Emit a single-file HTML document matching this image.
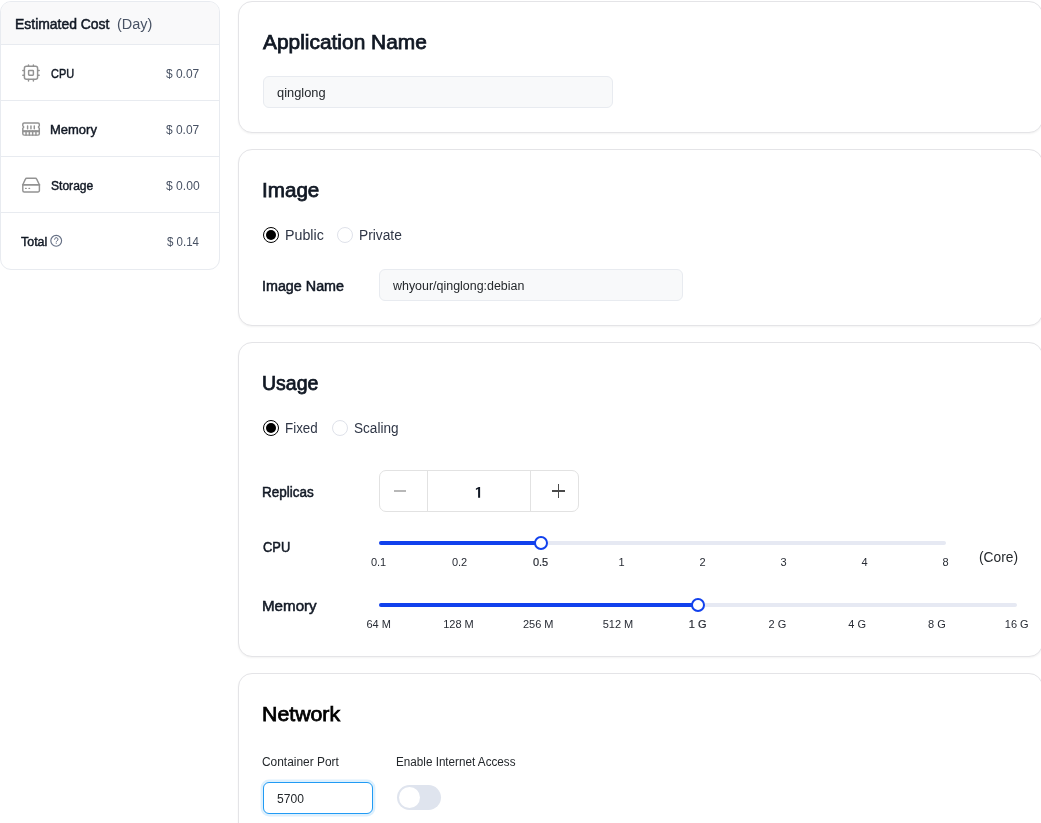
<!DOCTYPE html>
<html><head><meta charset="utf-8">
<style>
*{box-sizing:border-box;margin:0;padding:0}
html,body{width:1041px;height:823px;overflow:hidden;background:#fff;font-family:"Liberation Sans",sans-serif;}
.abs{position:absolute}
.t{position:absolute;white-space:pre;line-height:1;transform-origin:0 50%;}
.c{position:absolute;white-space:pre;line-height:1;transform:translateX(-50%);}
.panel{position:absolute;left:0;top:1px;width:220px;height:269px;border:1px solid #e8ebf0;border-radius:11px;background:#fff;overflow:hidden}
.panel .hd{position:absolute;left:0;top:0;width:100%;height:42px;background:#f9f9fa}
.hl{position:absolute;left:0;width:220px;height:1px;background:#e8ebf0}
.card{position:absolute;left:238px;width:805px;border:1px solid #e4e4e7;border-radius:14px;background:#fff;box-shadow:0 1px 2px rgba(0,0,0,0.05)}
.inp{position:absolute;border:1px solid #e8ebf0;background:#f8f9fa;border-radius:6px}
.radio{position:absolute;width:16px;height:16px;border-radius:50%;background:#fff}
.radio.on{border:1.5px solid #000}
.radio.on::after{content:"";position:absolute;left:50%;top:50%;width:10px;height:10px;margin:-5px 0 0 -5px;border-radius:50%;background:#000}
.radio.off{border:1px solid #dfe2ea}
.rail{position:absolute;height:4px;border-radius:2px;background:#e6e9f3}
.track{position:absolute;height:4px;border-radius:2px;background:#1141ed}
.thumb{position:absolute;width:14px;height:14px;border-radius:50%;background:#fff;border:2px solid #1141ed}
</style></head><body>
<!-- left panel -->
<div class="panel"><div class="hd"></div></div>
<div class="hl" style="top:44px"></div>
<div class="hl" style="top:100px"></div>
<div class="hl" style="top:156px"></div>
<div class="hl" style="top:212px"></div>

<!-- cards -->
<div class="card" style="top:1px;height:132px"></div>
<div class="card" style="top:149px;height:177px"></div>
<div class="card" style="top:342px;height:315px"></div>
<div class="card" style="top:673px;height:300px"></div>

<!-- inputs -->
<div class="inp" style="left:263px;top:76px;width:350px;height:32px"></div>
<div class="inp" style="left:379px;top:269px;width:304px;height:32px"></div>
<div class="inp" style="left:263px;top:782px;width:110px;height:32px;background:#fff;border:1.5px solid #219bf4;box-shadow:0 0 0 2.4px rgba(33,155,244,0.15)"></div>

<!-- radios -->
<div class="radio on" style="left:263px;top:227px"></div>
<div class="radio off" style="left:337px;top:227px"></div>
<div class="radio on" style="left:263px;top:420px"></div>
<div class="radio off" style="left:332px;top:420px"></div>

<!-- stepper -->
<div class="abs" style="left:379px;top:470px;width:200px;height:42px;border:1px solid #e2e2e2;border-radius:7px;background:#fff"></div>
<div class="abs" style="left:427px;top:471px;width:1px;height:40px;background:#e2e2e2"></div>
<div class="abs" style="left:530px;top:471px;width:1px;height:40px;background:#e2e2e2"></div>
<div class="abs" style="left:394px;top:490.3px;width:12px;height:1.5px;background:#b8b8b8"></div>
<div class="abs" style="left:551.5px;top:490.3px;width:13.5px;height:1.5px;background:#4a4a4a"></div>
<div class="abs" style="left:557.5px;top:484px;width:1.5px;height:14px;background:#4a4a4a"></div>

<svg class="abs" style="left:470px;top:480px" width="20" height="24" viewBox="470 480 20 24"><polygon fill="#111824" points="480.1,487.1 478.7,487.1 475.9,488.4 475.9,490.1 478.1,489.1 478.1,497.8 480.1,497.8"/></svg>
<!-- sliders -->
<div class="rail" style="left:379px;top:541px;width:567px"></div>
<div class="track" style="left:379px;top:541px;width:162px"></div>
<div class="thumb" style="left:534px;top:536px"></div>
<div class="rail" style="left:379px;top:603px;width:638px"></div>
<div class="track" style="left:379px;top:603px;width:319px"></div>
<div class="thumb" style="left:691px;top:598px"></div>

<!-- toggle -->
<div class="abs" style="left:397px;top:785px;width:44px;height:25px;border-radius:12.5px;background:#dfe4ee"></div>
<div class="abs" style="left:399px;top:787px;width:21px;height:21px;border-radius:50%;background:#fff"></div>

<!-- icons -->
<svg class="abs" style="left:0;top:0" width="230" height="280" viewBox="0 0 230 280" fill="none" stroke="#939393" stroke-width="1.45" stroke-linecap="round" stroke-linejoin="round">
 <!-- cpu -->
 <rect x="24.4" y="66.2" width="13.2" height="13.1" rx="2"/>
 <rect x="28.6" y="70.5" width="4.8" height="4.7" rx="0.7"/>
 <path d="M28.5 64.9v1.3M33.4 64.9v1.3M28.5 79.4v1.5M33.4 79.4v1.5M22.8 70.4h1.5M22.8 75.3h1.5M37.7 70.4h1.5M37.7 75.3h1.5"/>
 <!-- memory -->
 <path d="M22.8 124.3a1.3 1.3 0 0 1 1.3-1.3h13.9a1.3 1.3 0 0 1 1.3 1.3v1.6a1.2 1.2 0 0 0 0 2.3v5.6a1.3 1.3 0 0 1-1.3 1.3h-13.9a1.3 1.3 0 0 1-1.3-1.3v-5.6a1.2 1.2 0 0 0 0-2.3z"/>
 <path d="M22.8 131.2h16.5" stroke-width="2.1" stroke-linecap="butt"/><path d="M26.05 131v4M29.35 131v4M32.65 131v4M35.95 131v4"/>
 <path d="M27.6 125.9v2.8M30.95 125.9v2.8M34.3 125.9v2.8"/>
 <!-- storage -->
 <path d="M22.8 184.7l2.6-5.6a1.5 1.5 0 0 1 1.3-.9h8.7a1.5 1.5 0 0 1 1.3.9l2.7 5.6v5.8a1.5 1.5 0 0 1-1.5 1.5h-13.6a1.5 1.5 0 0 1-1.5-1.5z"/>
 <path d="M22.8 184.8h16.6" stroke-width="1.8"/>
 <path d="M25.6 188.4h.6M29 188.4h.6" stroke-width="1.3"/>
 <!-- question -->
 <circle cx="56.2" cy="240.8" r="5.4" stroke="#667085" stroke-width="1.15"/>
 <path d="M54.6 239.3a1.7 1.7 0 1 1 2.4 1.6c-.5.3-.8.6-.8 1.2" stroke="#667085" stroke-width="1"/>
 <circle cx="56.2" cy="243.6" r="0.5" fill="#667085" stroke="none"/>
</svg>

<div id="txt" style="position:absolute;left:0;top:0;width:1041px;height:823px;will-change:transform">
<span id="t0" class="t" style="left:15.23px;top:16.85px;font-size:14px;font-weight:400;color:#111824;transform:scaleX(0.9951);-webkit-text-stroke:0.5px;">Estimated Cost</span>
<span id="t1" class="t" style="left:117.39px;top:16.85px;font-size:14px;font-weight:400;color:#485264;transform:scaleX(1.0340);">(Day)</span>
<span id="t2" class="t" style="left:51.20px;top:68.14px;font-size:12px;font-weight:400;color:#111824;transform:scaleX(0.9108);-webkit-text-stroke:0.42px;">CPU</span>
<span id="t3" class="t" style="left:50.31px;top:124.14px;font-size:12px;font-weight:400;color:#111824;transform:scaleX(1.0814);-webkit-text-stroke:0.42px;">Memory</span>
<span id="t4" class="t" style="left:51.20px;top:180.14px;font-size:12px;font-weight:400;color:#111824;transform:scaleX(1.0055);-webkit-text-stroke:0.42px;">Storage</span>
<span id="t5" class="t" style="left:21.20px;top:236.14px;font-size:12px;font-weight:400;color:#111824;transform:scaleX(1.0374);-webkit-text-stroke:0.42px;">Total</span>
<span id="t6" class="t" style="left:166.30px;top:67.59px;font-size:12px;font-weight:400;color:#485264;transform:scaleX(0.9957);">$ 0.07</span>
<span id="t7" class="t" style="left:166.30px;top:123.59px;font-size:12px;font-weight:400;color:#485264;transform:scaleX(0.9957);">$ 0.07</span>
<span id="t8" class="t" style="left:166.00px;top:179.59px;font-size:12px;font-weight:400;color:#485264;transform:scaleX(1.0090);">$ 0.00</span>
<span id="t9" class="t" style="left:167.27px;top:235.59px;font-size:12px;font-weight:400;color:#485264;transform:scaleX(0.9586);">$ 0.14</span>
<span id="t10" class="t" style="left:262.80px;top:32.07px;font-size:20px;font-weight:400;color:#111824;transform:scaleX(1.0451);-webkit-text-stroke:0.75px;">Application Name</span>
<span id="t11" class="t" style="left:276.90px;top:87.14px;font-size:12px;font-weight:400;color:#24282c;transform:scaleX(1.0700);">qinglong</span>
<span id="t12" class="t" style="left:262.13px;top:180.17px;font-size:20px;font-weight:400;color:#111824;transform:scaleX(1.0316);-webkit-text-stroke:0.75px;">Image</span>
<span id="t13" class="t" style="left:285.32px;top:227.95px;font-size:14px;font-weight:400;color:#2f3646;transform:scaleX(1.0186);">Public</span>
<span id="t14" class="t" style="left:359.24px;top:227.95px;font-size:14px;font-weight:400;color:#2f3646;transform:scaleX(0.9831);">Private</span>
<span id="t15" class="t" style="left:262.49px;top:279.05px;font-size:14px;font-weight:400;color:#111824;transform:scaleX(1.0230);-webkit-text-stroke:0.5px;">Image Name</span>
<span id="t16" class="t" style="left:393.40px;top:280.14px;font-size:12px;font-weight:400;color:#24282c;transform:scaleX(1.0364);">whyour/qinglong:debian</span>
<span id="t17" class="t" style="left:262.02px;top:372.67px;font-size:20px;font-weight:400;color:#111824;transform:scaleX(0.9752);-webkit-text-stroke:0.75px;">Usage</span>
<span id="t18" class="t" style="left:285.12px;top:421.05px;font-size:14px;font-weight:400;color:#2f3646;transform:scaleX(0.9546);">Fixed</span>
<span id="t19" class="t" style="left:354.38px;top:421.05px;font-size:14px;font-weight:400;color:#2f3646;transform:scaleX(0.9699);">Scaling</span>
<span id="t20" class="t" style="left:262.13px;top:485.15px;font-size:14px;font-weight:400;color:#111824;transform:scaleX(0.9623);-webkit-text-stroke:0.5px;">Replicas</span>
<span id="t21" class="t" style="left:263.10px;top:539.65px;font-size:14px;font-weight:400;color:#111824;transform:scaleX(0.9197);-webkit-text-stroke:0.5px;">CPU</span>
<span id="t22" class="t" style="left:261.91px;top:599.35px;font-size:14px;font-weight:400;color:#111824;transform:scaleX(1.0816);-webkit-text-stroke:0.5px;">Memory</span>
<span id="t23" class="t" style="left:979.09px;top:550.45px;font-size:14px;font-weight:400;color:#24282c;transform:scaleX(0.9846);">(Core)</span>
<span id="t24" class="t" style="left:262.13px;top:703.97px;font-size:20px;font-weight:400;color:#000;transform:scaleX(1.0649);-webkit-text-stroke:0.75px;">Network</span>
<span id="t25" class="t" style="left:262.34px;top:755.94px;font-size:12px;font-weight:400;color:#24282c;transform:scaleX(0.9934);">Container Port</span>
<span id="t26" class="t" style="left:396.39px;top:755.94px;font-size:12px;font-weight:400;color:#24282c;transform:scaleX(0.9737);">Enable Internet Access</span>
<span id="t27" class="t" style="left:276.97px;top:793.24px;font-size:12px;font-weight:400;color:#24282c;transform:scaleX(1.0066);">5700</span>
<span class="c" style="left:378.60px;top:556.89px;font-size:11px;font-weight:400;color:#282c35">0.1</span>
<span class="c" style="left:459.60px;top:556.89px;font-size:11px;font-weight:400;color:#282c35">0.2</span>
<span class="c" style="left:540.60px;top:556.89px;font-size:11px;font-weight:400;-webkit-text-stroke:0.2px;color:#282c35">0.5</span>
<span class="c" style="left:621.60px;top:556.89px;font-size:11px;font-weight:400;color:#282c35">1</span>
<span class="c" style="left:702.60px;top:556.89px;font-size:11px;font-weight:400;color:#282c35">2</span>
<span class="c" style="left:783.60px;top:556.89px;font-size:11px;font-weight:400;color:#282c35">3</span>
<span class="c" style="left:864.60px;top:556.89px;font-size:11px;font-weight:400;color:#282c35">4</span>
<span class="c" style="left:945.60px;top:556.89px;font-size:11px;font-weight:400;color:#282c35">8</span>
<span class="c" style="left:378.70px;top:618.89px;font-size:11px;font-weight:400;color:#282c35">64 M</span>
<span class="c" style="left:458.45px;top:618.89px;font-size:11px;font-weight:400;color:#282c35">128 M</span>
<span class="c" style="left:538.20px;top:618.89px;font-size:11px;font-weight:400;color:#282c35">256 M</span>
<span class="c" style="left:617.95px;top:618.89px;font-size:11px;font-weight:400;color:#282c35">512 M</span>
<span class="c" style="left:697.70px;top:618.89px;font-size:11px;font-weight:400;-webkit-text-stroke:0.2px;color:#282c35">1 G</span>
<span class="c" style="left:777.45px;top:618.89px;font-size:11px;font-weight:400;color:#282c35">2 G</span>
<span class="c" style="left:857.20px;top:618.89px;font-size:11px;font-weight:400;color:#282c35">4 G</span>
<span class="c" style="left:936.95px;top:618.89px;font-size:11px;font-weight:400;color:#282c35">8 G</span>
<span class="c" style="left:1016.70px;top:618.89px;font-size:11px;font-weight:400;color:#282c35">16 G</span>
</div>
</body></html>
